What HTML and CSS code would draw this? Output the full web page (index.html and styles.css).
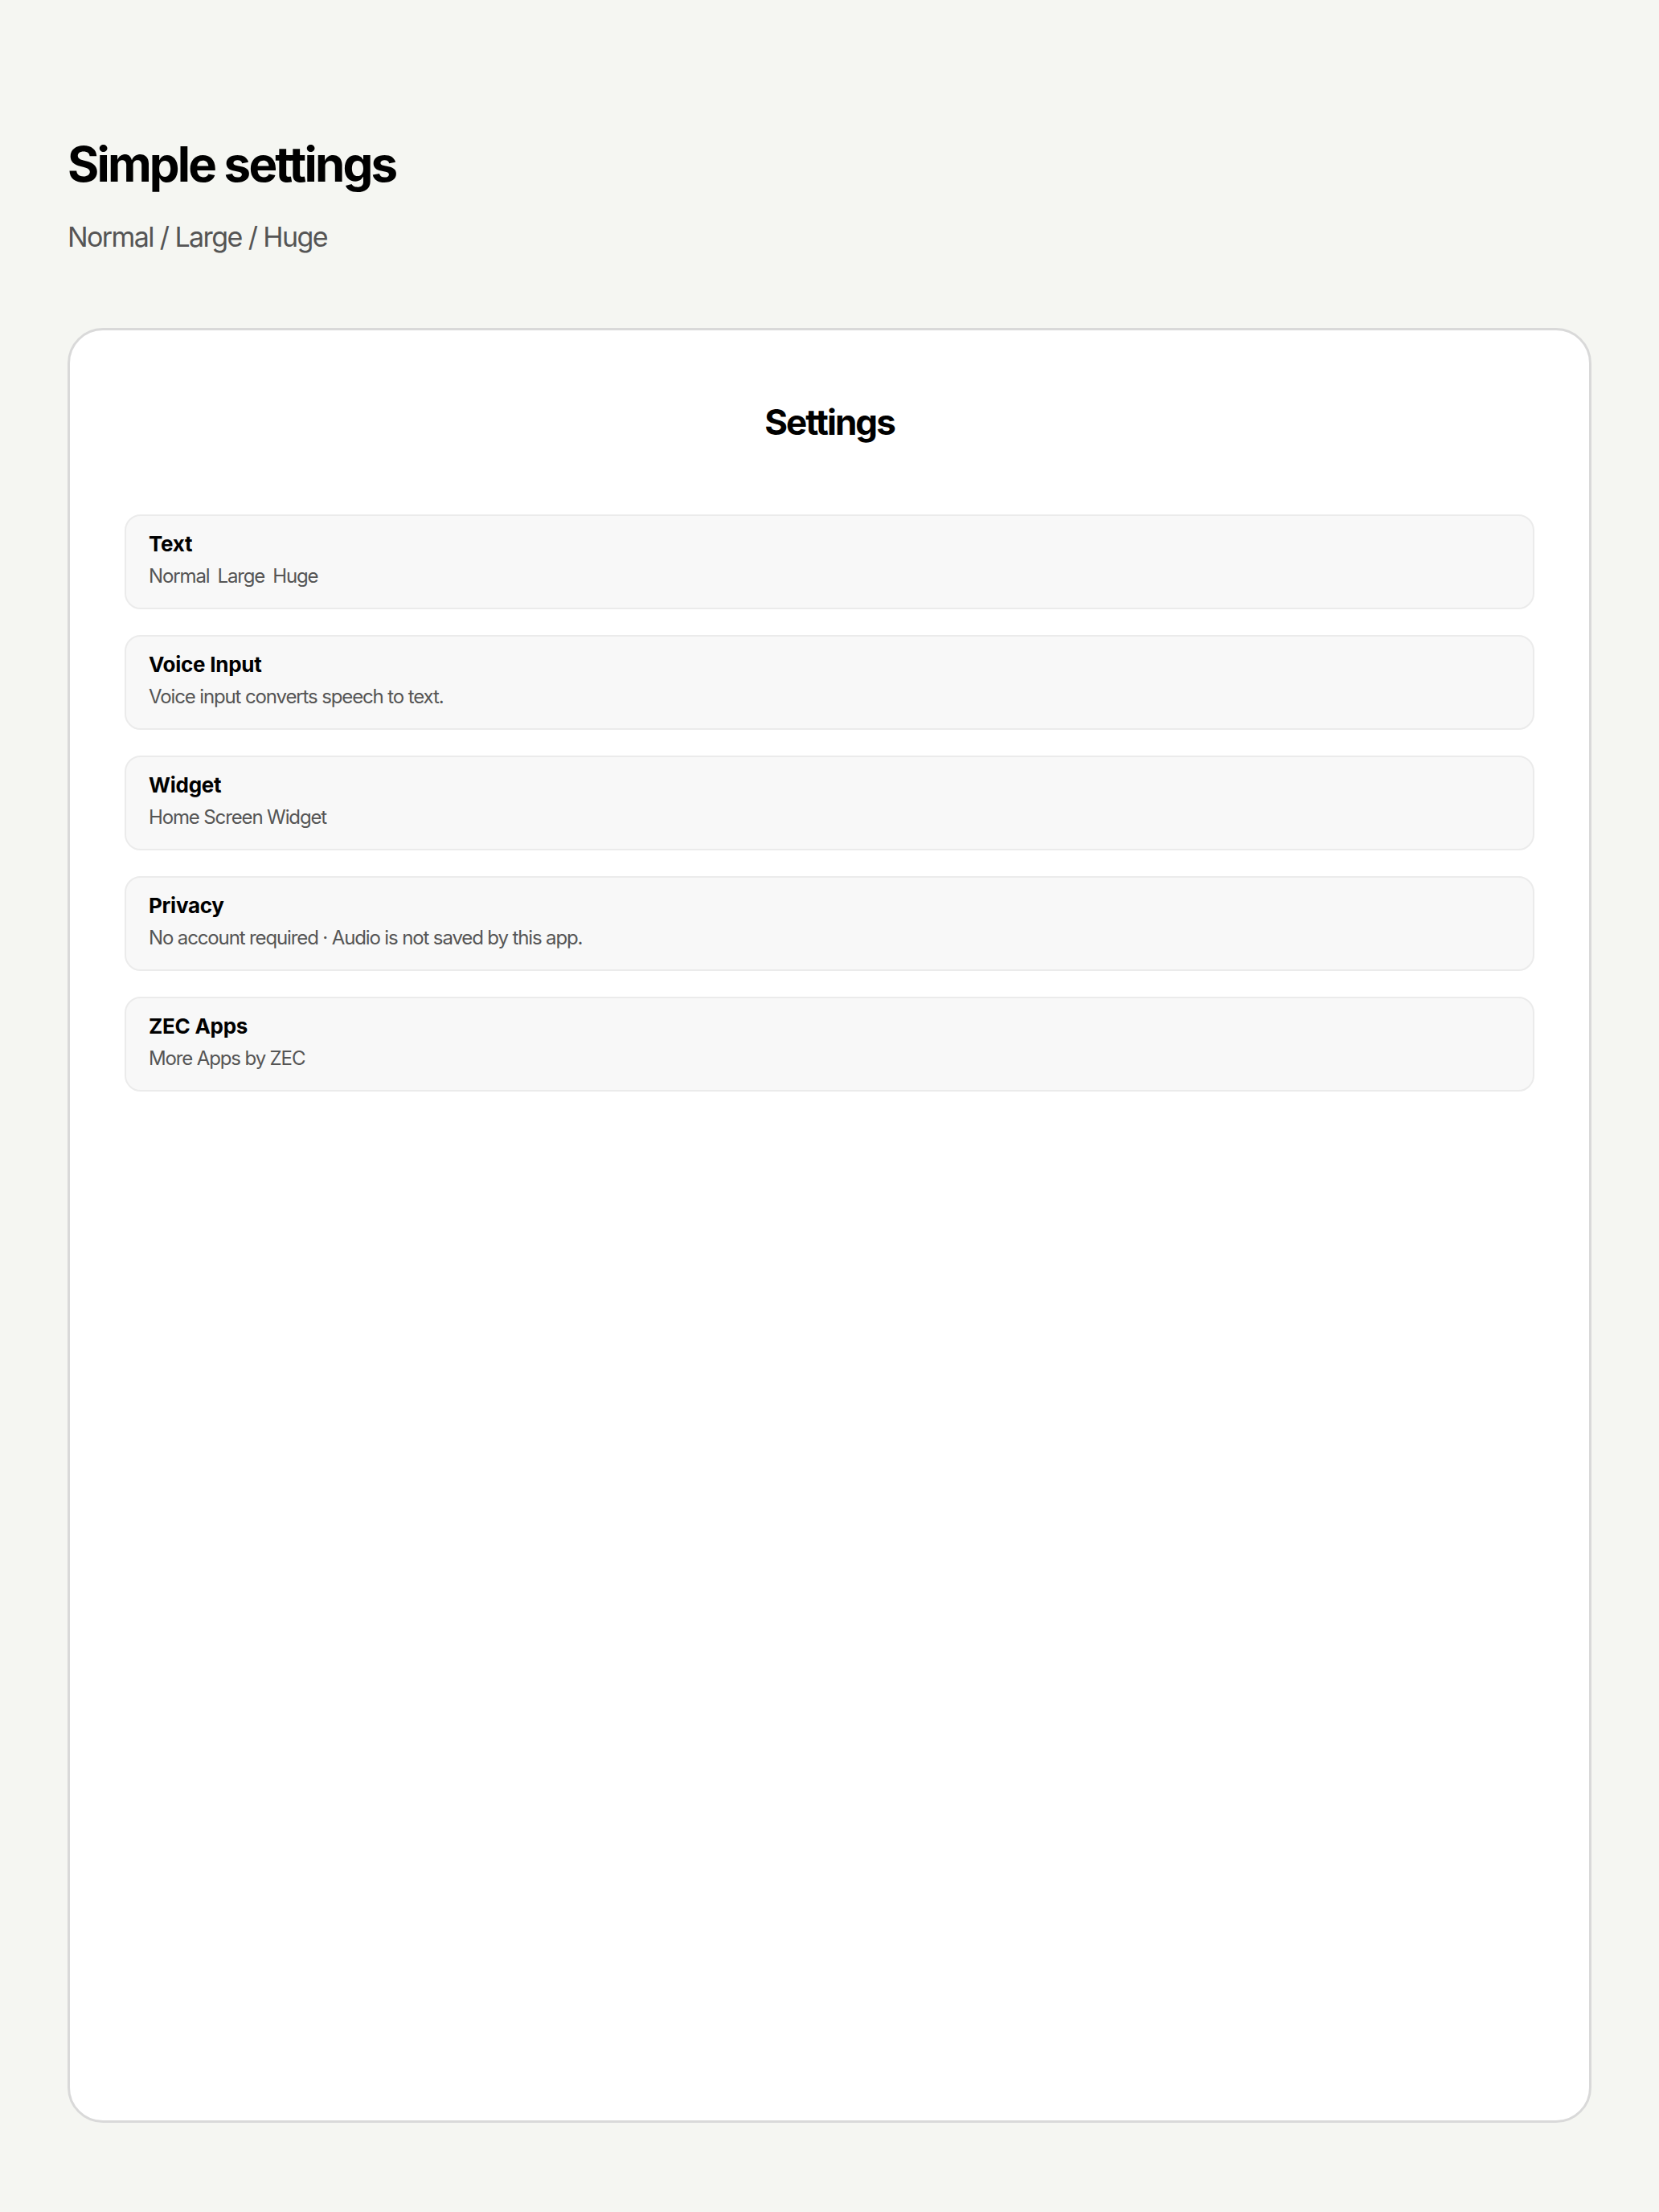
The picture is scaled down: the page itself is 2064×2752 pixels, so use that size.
FILE: index.html
```html
<!DOCTYPE html>
<html lang="en">

<head>
    <meta charset="UTF-8">
    <meta name="viewport" content="width=device-width, initial-scale=1.0">
    <title>Simple settings</title>
    <link rel="stylesheet" href="styles.css">
</head>

<body>
    <header class="intro">
        <h1>Simple settings</h1>
        <p class="sizes">Normal / Large / Huge</p>
    </header>

    <main class="screen">
        <h2>Settings</h2>
        <ul class="rows">
            <li class="row">
                <div class="row-title">Text</div>
                <div class="row-sub options">
                    <span>Normal</span>
                    <span>Large</span>
                    <span>Huge</span>
                </div>
            </li>
            <li class="row">
                <div class="row-title">Voice Input</div>
                <div class="row-sub">Voice input converts speech to text.</div>
            </li>
            <li class="row">
                <div class="row-title">Widget</div>
                <div class="row-sub">Home Screen Widget</div>
            </li>
            <li class="row">
                <div class="row-title">Privacy</div>
                <div class="row-sub">No account required · Audio is not saved by this app.</div>
            </li>
            <li class="row">
                <div class="row-title">ZEC Apps</div>
                <div class="row-sub">More Apps by ZEC</div>
            </li>
        </ul>
    </main>
</body>

</html>
```

FILE: styles.css
```css
body {
    margin: 0;
    padding: 168px 84px 0;
    background-color: #f5f6f2;
    font-family: Inter, "Noto Sans", sans-serif;
    color: #000;
}
h1 {
    margin: 0;
    font-size: 60px;
    font-weight: 700;
    letter-spacing: -0.047em;
}
.sizes {
    margin: 34px 0 0;
    font-size: 34px;
    letter-spacing: -0.047em;
    color: #555;
}
.screen {
    margin-top: 93px;
    height: 2233px;
    box-sizing: border-box;
    padding: 87px 68px;
    background-color: #fff;
    border: 3px solid #d9d9d9;
    border-radius: 44px;
}
h2 {
    margin: 0;
    text-align: center;
    font-size: 44px;
    font-weight: 700;
    letter-spacing: -0.045em;
}
.rows {
    list-style: none;
    margin: 88px 0 0;
    padding: 0;
    display: flex;
    flex-direction: column;
    gap: 32px;
}
.row {
    padding: 19px 28px 25px;
    background-color: #f8f8f8;
    border: 2px solid #ebebeb;
    border-radius: 20px;
}
.row-title {
    font-size: 26px;
    font-weight: 700;
    letter-spacing: -0.01em;
}
.row-sub {
    margin-top: 10px;
    font-size: 24px;
    letter-spacing: -0.047em;
    color: #555;
}
.options {
    display: flex;
    gap: 10px;
}
```
